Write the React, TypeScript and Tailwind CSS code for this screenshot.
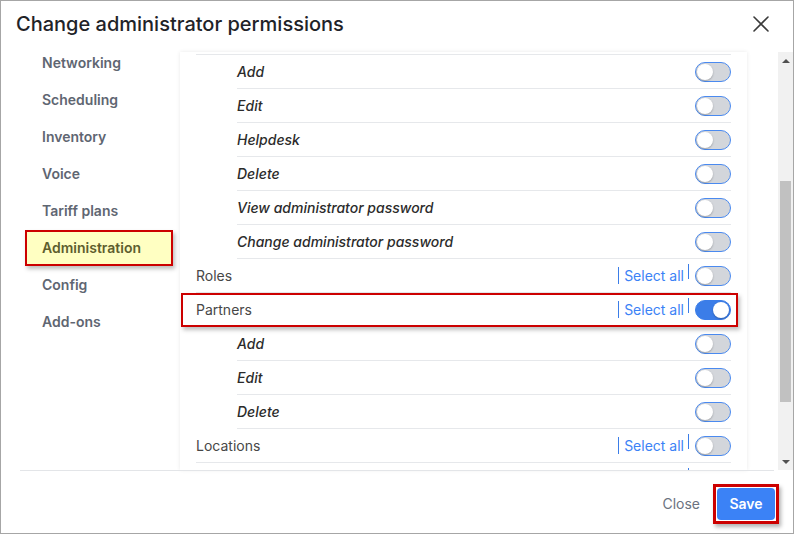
import React from "react";

const Toggle = ({ on = false }: { on?: boolean }) => (
  <div
    className={
      "w-[36px] h-[20px] rounded-full border-[1.5px] flex items-center px-[1px] " +
      (on ? "bg-[#3b7de8] border-[#3b7de8] justify-end" : "bg-[#d3d6db] border-[#4a8af0] justify-start")
    }
  >
    <div className="w-[16px] h-[16px] rounded-full bg-white shadow-[0_1px_2px_rgba(0,0,0,0.25)]" />
  </div>
);

const SelectAll = () => (
  <div className="flex items-center mr-[6px]">
    <span className="border-l border-[#3b7de8] h-[17px] pl-[5px] pr-[4px] leading-[17px] text-[14px] text-[#3b82f6]">
      Select all
    </span>
    <span className="w-px h-[15px] bg-[#3b7de8] mb-[8px]" />
  </div>
);

const SubRow = ({ label }: { label: string }) => (
  <div className="ml-[41px] h-[34px] border-b border-[#e6e8eb] flex items-center justify-between">
    <span className="italic font-medium text-[14px] text-[#2b2b2b]">{label}</span>
    <Toggle />
  </div>
);

const MainRow = ({ label, on = false, marked = false }: { label: string; on?: boolean; marked?: boolean }) => (
  <div className="relative h-[34px] border-b border-[#e6e8eb] flex items-center justify-between">
    <span className="text-[14px] text-[#474747]">{label}</span>
    <div className="flex items-center">
      <SelectAll />
      <Toggle on={on} />
    </div>
    {marked && (
      <div className="absolute left-[-15px] right-[-7px] top-0 bottom-[-1px] border-2 border-[#cc0000] shadow-[2px_3px_4px_rgba(0,0,0,0.25)] pointer-events-none" />
    )}
  </div>
);

const sidebar = ["Networking", "Scheduling", "Inventory", "Voice", "Tariff plans", "Administration", "Config", "Add-ons"];

export default function App() {
  return (
    <div
      className="w-[794px] h-[534px] border border-[#a6a6a6] bg-white flex flex-col overflow-hidden"
      style={{ fontFamily: "Inter, 'Noto Sans', sans-serif" }}
    >
      {/* header */}
      <div className="h-[43px] shrink-0 flex items-center justify-between pl-[15px] pr-[24px]">
        <h1 className="text-[20px] font-medium text-[#1f2328] mt-[3px]">Change administrator permissions</h1>
        <svg width="16" height="16" viewBox="0 0 16 16" className="mt-[3px]">
          <path d="M1 1 L15 15 M15 1 L1 15" stroke="#3a3a3a" strokeWidth="1.6" strokeLinecap="round" />
        </svg>
      </div>

      {/* main */}
      <div className="flex-1 flex min-h-0">
        {/* sidebar */}
        <div className="w-[179px] shrink-0 flex flex-col">
          {sidebar.map((s) =>
            s === "Administration" ? (
              <div key={s} className="h-[37px] flex items-center">
                <div className="ml-[24px] w-[148px] h-[36px] border-2 border-[#cc0000] bg-[#ffffc2] flex items-center pl-[15px] shadow-[2px_3px_4px_rgba(0,0,0,0.25)]">
                  <span className="text-[14px] font-semibold text-[#5e5e2e]">{s}</span>
                </div>
              </div>
            ) : (
              <div key={s} className="h-[37px] flex items-center pl-[41px]">
                <span className="text-[14px] font-semibold text-[#5f6672]">{s}</span>
              </div>
            )
          )}
        </div>

        {/* right column */}
        <div className="flex-1 flex pt-[8px] min-h-0">
          <div className="w-[567px] bg-white shadow-[0_0_4px_rgba(0,0,0,0.09)] overflow-hidden pt-[2px] px-[16px]">
            <div className="border-t border-[#e6e8eb]">
              <SubRow label="Add" />
              <SubRow label="Edit" />
              <SubRow label="Helpdesk" />
              <SubRow label="Delete" />
              <SubRow label="View administrator password" />
              <SubRow label="Change administrator password" />
              <MainRow label="Roles" />
              <MainRow label="Partners" on marked />
              <SubRow label="Add" />
              <SubRow label="Edit" />
              <SubRow label="Delete" />
              <MainRow label="Locations" />
              <div className="h-[34px] flex justify-end pr-[42px] pt-[5px]">
                <span className="w-px h-[15px] bg-[#3b7de8]" />
              </div>
            </div>
          </div>
          <div className="flex-1" />
          {/* scrollbar */}
          <div className="w-[15px] h-[418px] bg-[#f1f1f1] flex flex-col items-center">
            <div className="h-[17px] flex items-center justify-center">
              <div className="w-0 h-0 border-l-[4px] border-r-[4px] border-b-[4px] border-l-transparent border-r-transparent border-b-[#505050]" />
            </div>
            <div className="h-[112px]" />
            <div className="w-[11px] h-[221px] bg-[#c1c1c1]" />
            <div className="flex-1" />
            <div className="h-[17px] flex items-center justify-center">
              <div className="w-0 h-0 border-l-[4px] border-r-[4px] border-t-[4px] border-l-transparent border-r-transparent border-t-[#505050]" />
            </div>
          </div>
        </div>
      </div>

      {/* footer */}
      <div className="mx-[19px] border-t border-[#e3e5e8]" />
      <div className="h-[62px] shrink-0 flex items-center justify-end pr-[14px]">
        <span className="text-[14px] text-[#6b7280] mr-[13px] mt-[3px]">Close</span>
        <div className="border-[3px] border-[#cc0000] p-px shadow-[2px_3px_4px_rgba(0,0,0,0.3)] mt-[3px]">
          <div className="w-[58px] h-[32px] rounded-[4px] bg-[#3b82f6] flex items-center justify-center">
            <span className="text-[14px] font-semibold text-white">Save</span>
          </div>
        </div>
      </div>
    </div>
  );
}
